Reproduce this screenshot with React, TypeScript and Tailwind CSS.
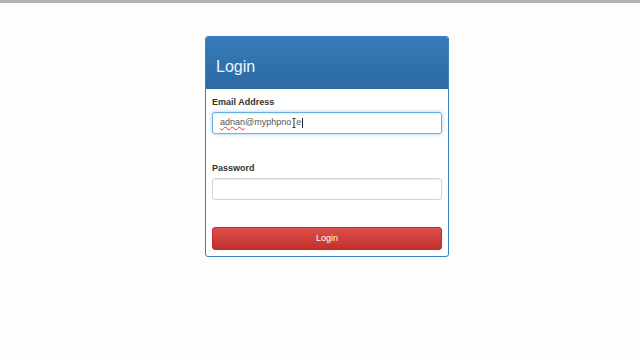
export default function App() {
  return (
    <div className="min-h-[360px] bg-[#fdfdfd] font-['Liberation_Sans',Arial,sans-serif]">
      <div className="h-[3px] bg-[#b3b3b3]" />
      <div className="mt-[33px] ml-[205px] w-[244px] overflow-hidden rounded-[3px] border border-[#3b7dc1] bg-white">
        <div className="flex h-[52px] items-center bg-gradient-to-b from-[#357bb9] to-[#2c6aa3] px-[10px] pt-[7px] text-[16px] text-[#eef5fc]">
          Login
        </div>
        <div className="px-[6px] pt-[7px] pb-[6px]">
          <label className="mb-[4px] block h-[12px] text-[9px] leading-[12px] font-bold text-[#333]">
            Email Address
          </label>
          <div className="flex h-[22px] items-center rounded-[3px] border border-[#66afe9] bg-white px-[7px] text-[9px] text-[#555] shadow-[inset_0_1px_1px_rgba(0,0,0,0.075),0_0_4px_rgba(102,175,233,0.6)]">
            <span className="underline decoration-[#e83a3a] decoration-wavy decoration-[0.5px] underline-offset-[1px]">
              adnan
            </span>
            <span>@myphpno</span>
            <svg width="4" height="10" viewBox="0 0 4 10" className="mx-[0.5px]">
              <path d="M0.5 0.5h3M2 0.5v9M0.5 9.5h3" stroke="#222" strokeWidth="0.9" fill="none" />
            </svg>
            <span>e</span>
            <span className="ml-[1px] h-[10px] w-[1px] bg-[#222]" />
          </div>
          <label className="mt-[28px] mb-[4px] block h-[12px] text-[9px] leading-[12px] font-bold text-[#333]">
            Password
          </label>
          <div className="h-[22px] rounded-[3px] border border-[#d4d4d4] bg-white shadow-[inset_0_1px_1px_rgba(0,0,0,0.075)]" />
          <button className="mt-[27px] flex h-[23px] w-full items-center justify-center rounded-[3px] border border-[#b92c28] bg-gradient-to-b from-[#db4f4c] to-[#c42e2b] text-[9px] text-white">
            Login
          </button>
        </div>
      </div>
    </div>
  );
}
